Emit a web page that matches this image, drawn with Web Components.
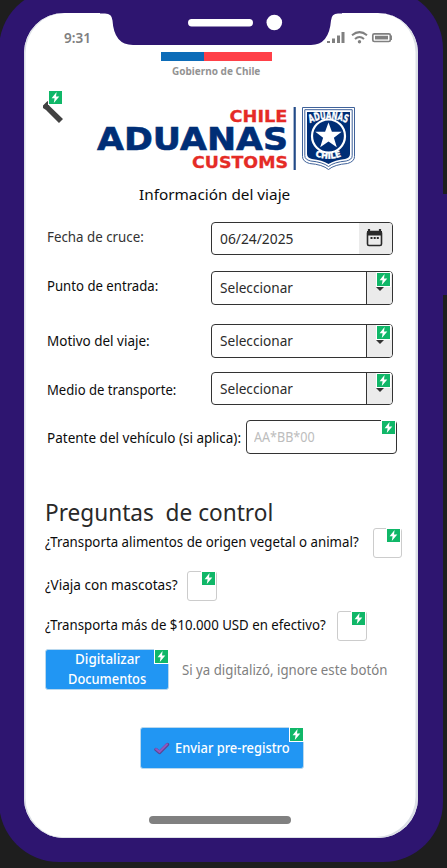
<!DOCTYPE html>
<html lang="es"><head><meta charset="utf-8"><title>Información del viaje</title>
<style>html,body{margin:0;height:868px;overflow:hidden;background:#1e1e1e;font-family:"Noto Sans","Open Sans",sans-serif}</style></head>
<body><travel-app></travel-app>
<script>
const define=(name,html,setup)=>customElements.define(name,class extends HTMLElement{
  connectedCallback(){
    if(this.shadowRoot)return;
    const t=document.createElement('template');t.innerHTML=html;
    this.attachShadow({mode:'open'}).append(t.content.cloneNode(true));
    if(setup)setup(this,this.shadowRoot);
  }
});

// Text condensed horizontally to the width given in the w attribute.
define('fit-text',`<style>:host{display:inline-block;white-space:pre;flex:none;line-height:20px;height:20px}span{display:inline-block;transform-origin:0 50%}</style><span><slot></slot></span>`,(el,root)=>{
  const w=+el.getAttribute('w'),s=root.querySelector('span');
  el.style.width=w+'px';
  s.style.transform='scaleX('+w/s.offsetWidth+')';
});

define('flash-badge',`<style>:host{display:block;position:absolute;width:13px;height:13px;background:#10b768;box-shadow:0 0 0 1px #fff}svg{display:block}</style>
<svg width="13" height="13" viewBox="0 0 13 13"><path d="M7.600 1 2.600 7.200h3L4.800 12l5.500-6.500H7z" fill="#fff"/></svg>`);

define('status-bar',`<style>:host{display:flex;height:35px;justify-content:space-between;padding:0 26px 0 40px;color:#808080;font-size:15px;font-weight:600}fit-text{margin-top:14px}svg{margin-top:17px}</style>
<fit-text w="27">9:31</fit-text>
<svg width="66" height="16" viewBox="0 0 66 16" fill="none" stroke="#808080"><path d="M2.500 11v2M7.500 8.500V13M12.500 5.500V13M17 2v11" stroke-width="3"/><path d="M26 5.200q7.500-6.200 15 0M29 9q4.500-4 9 0" stroke-width="2"/><circle cx="33.500" cy="11.700" r="1.700" fill="#808080" stroke="none"/><rect x="46.800" y="3.800" width="17.500" height="7.700" rx="1.500" stroke-width="1.700"/><path d="M49 7.600h13" stroke-width="3.700"/><path d="M65.200 5.500v4.500" stroke-width="1.500"/></svg>`);

define('gov-mark',`<style>:host{display:block;width:111px;margin:4px 0 0 137px;color:#939393;font-size:10px;font-weight:700}i{display:block;height:8.500px;background:linear-gradient(90deg,#0c6cb8 0 43px,#ff4048 43px)}fit-text{margin:.5px 0 0 11px}</style><i></i><fit-text w="88">Gobierno de Chile</fit-text>`);

define('back-link',`<style>:host{display:block;position:relative;width:22px;height:34px}svg{display:block}flash-badge{left:7px;top:1px}</style>
<svg width="22" height="34" viewBox="0 0 22 34"><path d="M1 15.500 5.500 11 8 13.500 7 15.500 21 29l-4 4L4 20 1 18z" fill="#424242"/></svg><flash-badge></flash-badge>`);

define('customs-logo',`<style>:host{display:block;width:262px;height:68px}svg{display:block;font-family:"DejaVu Sans",sans-serif;font-weight:700}</style>
<svg width="262" height="68" viewBox="95 104 262 68"><g font-size="16.500" fill="#e52b26" stroke="#e52b26" stroke-width=".3"><text x="229.500" y="122" textLength="58" lengthAdjust="spacingAndGlyphs">CHILE</text><text x="192" y="167.700" textLength="96" lengthAdjust="spacingAndGlyphs">CUSTOMS</text></g><text x="97" y="149.700" font-size="32" fill="#002e76" stroke="#002e76" stroke-width=".6" textLength="191" lengthAdjust="spacingAndGlyphs">ADUANAS</text>
<path d="M294.700 107v63" stroke="#234b88" stroke-width="2.200"/>
<g fill="#fff" stroke="#3f629a"><path d="M302.500 107.500h52v49q0 5-7 7-13 1-19 6-6-5-19-6-7-2-7-7z"/><path d="M304.800 109.700h47.400v46q0 4-6 5.300-12 1-17.700 5.500-6-4.500-17.700-5.500-6-1.300-6-5.300z"/></g><path d="M307 112h43v42q0 4-5 5-10 1-16.500 5-6.500-4-16.500-5-5-1-5-5z" fill="#002e76"/>
<circle cx="328.500" cy="136" r="16.500" fill="#002e76" stroke="#fff" stroke-width="2.200"/><path d="m328.500 122.500 3.400 9.200h9.800l-7.800 6 2.900 9.600-8.300-5.700-8.300 5.700 2.900-9.600-7.800-6h9.800z" fill="#fff"/>
<g fill="#fff" stroke="#fff" stroke-width=".4"><path id="a" d="M310 123Q328.500 115 347 123" fill="none" stroke="none"/><path id="c" d="M315 156Q328.500 161.500 342 156" fill="none" stroke="none"/><text font-size="11"><textPath href="#a" textLength="38" lengthAdjust="spacingAndGlyphs">ADUANAS</textPath></text><text font-size="8.500"><textPath href="#c" textLength="27" lengthAdjust="spacingAndGlyphs">CHILE</textPath></text></g></svg>`);

define('form-row',`<style>:host{display:flex;justify-content:space-between;align-items:center;height:33px;padding-left:23px;font-size:14px;color:#0c0c0c}::slotted(fit-text){margin-top:var(--label-shift,0)}</style><slot></slot>`);

define('select-field',`<style>:host{display:flex;position:relative;box-sizing:border-box;width:182.500px;height:33.500px;border:1px solid #333;border-radius:4px;align-items:center;color:#2b2b2b;background:#fff}fit-text{margin-left:8px}
.arrow{margin-left:auto;width:26px;height:100%;box-sizing:border-box;border-left:1px solid #333;background:#ebebeb;border-radius:0 3px 3px 0;display:flex;align-items:center;justify-content:center}.arrow svg{margin-top:2px}flash-badge{right:2px;top:1px}</style>
<fit-text w="73">Seleccionar</fit-text><div class="arrow"><svg width="8" height="4"><path d="M0 0h8L4 4z" fill="#333"/></svg></div><flash-badge></flash-badge>`);

define('date-field',`<style>:host{display:flex;box-sizing:border-box;width:182.500px;height:33.500px;border:1px solid #333;border-radius:4px;align-items:center;color:#2b2b2b;background:#fff}fit-text{margin-left:8px}div{margin-left:auto;width:33px;height:100%;background:#ebebeb;border-radius:0 3px 3px 0;display:flex;align-items:center;justify-content:center}svg{margin:-2px 2px 0 0}</style>
<fit-text w="73">06/24/2025</fit-text><div><svg width="17" height="19" viewBox="0 0 17 19"><path d="M3 3V1M14 3V1" stroke="#292929" stroke-width="2.200"/><rect x="1.500" y="3.500" width="14" height="14" rx="1.500" fill="#ebebeb" stroke="#292929" stroke-width="1.600"/><path d="M1 3h15v4.500H1z" fill="#292929"/><path d="M4.500 10h2M7.700 10h2M10.800 10h2" stroke="#292929" stroke-width="2"/></svg></div>`);

define('plate-field',`<style>:host{display:flex;position:relative;box-sizing:border-box;width:151px;height:33.500px;border:1px solid #333;border-radius:4px;align-items:center;color:#bdbdbd;background:#fff}fit-text{margin-left:7px}flash-badge{right:1px;top:0}</style><fit-text w="61">AA*BB*00</fit-text><flash-badge></flash-badge>`);

define('check-box',`<style>:host{display:block;position:relative;box-sizing:border-box;width:29.500px;height:29.500px;border:1px solid #ccc;border-radius:3px;background:#fff;flex:none}flash-badge{right:1px;top:0}</style><flash-badge></flash-badge>`);

define('question-row',`<style>:host{display:flex;align-items:flex-start;height:29.500px;padding-left:21px;font-size:14px;color:#0c0c0c}::slotted(fit-text){margin-top:4px}</style><slot></slot>`);

define('action-button',`<style>:host{display:flex;position:relative;box-sizing:border-box;align-items:center;justify-content:center;background:#2196f3;border:1px solid #b9d8ee;border-radius:3px;color:#fff;font-size:14px;font-weight:500;flex:none}flash-badge{right:0;top:0}</style><slot></slot><flash-badge></flash-badge>`);

define('phone-frame',`<style>:host{display:block;position:relative;width:447px;height:868px;overflow:hidden}
.shell{position:absolute;left:-1px;top:-11px;width:444px;height:873px;border-radius:60px;background:#2e1570}
.side{position:absolute;left:442px;top:194px;width:5px;height:101px;background:#2e1570}
.screen{position:absolute;left:24px;top:13px;width:393.500px;height:825px;border-radius:40px;background:#fff;box-shadow:inset -2.500px -1px 0 #dce0e6,inset 1.500px 0 0 #dce0e6}
.notch{position:absolute;left:100px;top:10px}</style>
<div class="shell"></div><div class="side"></div><div class="screen"><slot></slot></div>
<svg class="notch" width="242" height="37" viewBox="100 10 242 37"><path d="M100 10v3.500h5q7 0 7.500 7Q114 45 133 45h178q18 0 20-24.500 .5-7 7-7h4V10z" fill="#2e1570"/><rect x="188" y="19" width="65" height="7.500" rx="3.700" fill="#fff"/><circle cx="274.300" cy="22.500" r="7.800" fill="#fff"/></svg>`);

define('travel-app',`<style>:host{display:block}
back-link{margin-left:18px}
.brand{display:flex;height:94px;margin-top:9px}.brand customs-logo{margin:14px 0 0 31px}
.title{display:flex;margin:0 0 0 115px;font-size:15px;color:#0c0c0c}
form-row{padding-right:24.500px}
.heading{display:flex;margin:48px 0 0 21px;font-size:24px;color:#292929}
.scan{display:flex;align-items:center;margin:8px 0 0 21px;font-size:14px;color:#808080}.scan action-button{width:124px;height:41px;margin-right:13px}.scan>fit-text{margin-top:2px}
.lines{display:flex;flex-direction:column;align-items:center}
.send{width:164px;height:41.500px;margin:37.500px 0 0 115.500px}.send svg{margin:2px 5px 0 0}
.home{width:142px;height:8px;border-radius:4px;background:#808080;margin:47.500px 0 0 125px}</style>
<phone-frame>
<status-bar></status-bar><gov-mark></gov-mark>
<div class="brand"><back-link></back-link><customs-logo></customs-logo></div>
<div class="title"><fit-text w="151">Información del viaje</fit-text></div>
<form-row style="margin-top:18px;--label-shift:-3px;color:#333"><fit-text w="97">Fecha de cruce:</fit-text><date-field></date-field></form-row>
<form-row style="margin-top:16.500px;--label-shift:-4px"><fit-text w="111">Punto de entrada:</fit-text><select-field></select-field></form-row>
<form-row style="margin-top:20px"><fit-text w="103">Motivo del viaje:</fit-text><select-field></select-field></form-row>
<form-row style="margin-top:14.500px;--label-shift:2px"><fit-text w="129">Medio de transporte:</fit-text><select-field></select-field></form-row>
<form-row style="margin-top:15.500px;padding-right:20.500px;--label-shift:2px"><fit-text w="194">Patente del vehículo (si aplica):</fit-text><plate-field></plate-field></form-row>
<div class="heading"><fit-text w="228">Preguntas  de control</fit-text></div>
<question-row style="margin-top:6.500px"><fit-text w="314">¿Transporta alimentos de origen vegetal o animal?</fit-text><check-box style="margin-left:13.500px"></check-box></question-row>
<question-row style="margin-top:13.500px"><fit-text w="133">¿Viaja con mascotas?</fit-text><check-box style="margin-left:9px"></check-box></question-row>
<question-row style="margin-top:10.500px"><fit-text w="280.500">¿Transporta más de $10.000 USD en efectivo?</fit-text><check-box style="margin-left:11.500px"></check-box></question-row>
<div class="scan"><action-button><div class="lines"><fit-text w="65">Digitalizar</fit-text><fit-text w="78">Documentos</fit-text></div></action-button><fit-text w="205">Si ya digitalizó, ignore este botón</fit-text></div>
<action-button class="send"><svg width="16" height="13" viewBox="0 0 16 13"><path d="M2 7.500 5.500 10.500 13.500 2.500" fill="none" stroke="#5c4690" stroke-width="3.400" stroke-linecap="round" stroke-linejoin="round"/><path d="M2 7 5.500 9.800 13 2.300" fill="none" stroke="#8f58c2" stroke-width="2" stroke-linecap="round"/></svg><fit-text w="115">Enviar pre-registro</fit-text></action-button>
<div class="home"></div>
</phone-frame>`);
</script></body></html>
